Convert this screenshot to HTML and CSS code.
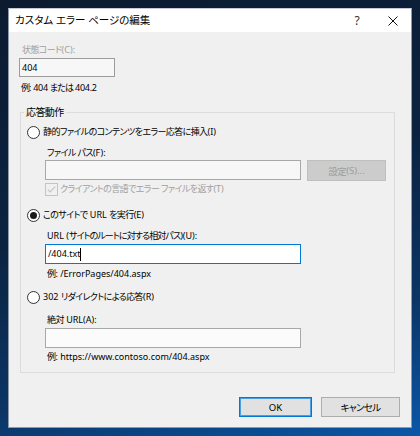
FILE: index.html
```html
<!DOCTYPE html>
<html lang="ja">
<head>
<meta charset="utf-8">
<title>カスタム エラー ページの編集</title>
<link rel="stylesheet" href="styles.css">
</head>
<body>
<div class="window">
  <div class="titlebar">
    <span class="title">カスタム エラー ページの編集</span>
    <span class="tb-btn help">?</span>
    <span class="tb-btn close"><svg width="10" height="10" viewBox="0 0 10 10"><path d="M0.5 0.5L9.5 9.5M9.5 0.5L0.5 9.5" stroke="#111" stroke-width="1" fill="none"/></svg></span>
  </div>
  <div class="client">
    <div class="row disabled r-status"><span class="ja">状態コード</span>(C):</div>
    <div class="textbox tb-status">404</div>
    <div class="row r-ex1"><span class="ja">例</span>: 404 <span class="ja">または</span> 404.2</div>

    <fieldset class="group">
      <legend><span class="ja">応答動作</span></legend>

      <div class="row radio-row r1"><span class="radio"></span><span><span class="ja">静的ファイルのコンテンツをエラー応答に挿入</span>(I)</span></div>
      <div class="row indent r-fp"><span class="ja">ファイル パス</span>(F):</div>
      <div class="input-row">
        <div class="textbox wide"></div>
        <div class="btn btn-disabled"><span class="ja">設定</span>(S)...</div>
      </div>
      <div class="row check-row">
        <svg class="check" width="13" height="13" viewBox="0 0 13 13"><rect x="0.5" y="0.5" width="12" height="12" fill="#f0f0f0" stroke="#c4c4c4"/><path d="M2.8 6.6L5.2 9L10.2 3.6" stroke="#c4c4c4" stroke-width="1.2" fill="none"/></svg>
        <span class="disabled"><span class="ja">クライアントの言語でエラー ファイルを返す</span>(T)</span>
      </div>

      <div class="row radio-row r2"><span class="radio on"></span><span><span class="ja">このサイトで</span> URL <span class="ja">を実行</span>(E)</span></div>
      <div class="row indent r-url">URL (<span class="ja">サイトのルートに対する相対パス</span>)(U):</div>
      <div class="textbox wide focused tb-url"><span>/404.txt</span><span class="caret"></span></div>
      <div class="row indent r-ex2"><span class="ja">例</span>: /ErrorPages/404.aspx</div>

      <div class="row radio-row r3"><span class="radio"></span><span>302 <span class="ja">リダイレクトによる応答</span>(R)</span></div>
      <div class="row indent r-abs"><span class="ja">絶対</span> URL(A):</div>
      <div class="textbox wide white tb-abs"></div>
      <div class="row indent r-ex3"><span class="ja">例</span>: https://www.contoso.com/404.aspx</div>
    </fieldset>

    <div class="buttons">
      <div class="btn btn-default ok">OK</div>
      <div class="btn cancel"><span class="ja">キャンセル</span></div>
    </div>
  </div>
</div>
</body>
</html>
```

FILE: styles.css
```css
html, body {
  margin: 0;
  padding: 0;
}
body {
  width: 420px;
  height: 436px;
  overflow: hidden;
  background: linear-gradient(165deg, #0c1b2f 0%, #0b2341 45%, #0b3565 75%, #0a57a8 100%);
  font-family: "Noto Sans", "Noto Sans CJK JP", sans-serif;
  font-size: 9px;
  font-feature-settings: "palt";
  color: #000;
}
.ja {
  letter-spacing: -0.6px;
}
.window {
  box-sizing: border-box;
  margin: 8px 0 0 8px;
  width: 404px;
  height: 420px;
  border: 1px solid #8e9aa8;
  border-top-color: #c8ccd2;
  background: #f0f0f0;
  display: flex;
  flex-direction: column;
}
.titlebar {
  height: 23px;
  background: #fff;
  display: flex;
  align-items: center;
  line-height: 23px;
}
.title {
  flex: 1;
  padding-left: 6px;
  font-size: 10.5px;
}
.tb-btn {
  width: 36px;
  height: 23px;
  display: flex;
  align-items: center;
  justify-content: center;
}
.help {
  font-size: 12px;
  color: #333;
}
.close svg {
  display: block;
}
.client {
  flex: 1;
  padding-left: 10px;
  display: flex;
  flex-direction: column;
  align-items: flex-start;
}
.row {
  height: 14px;
  line-height: 14px;
  white-space: pre;
  display: flex;
  align-items: center;
}
.disabled {
  color: #a0a0a0;
}
.r-status {
  margin-top: 11px;
  padding-left: 3px;
}
.textbox {
  box-sizing: border-box;
  height: 20px;
  border: 1px solid #a8a8a8;
  background: #f7f7f7;
  padding-left: 2px;
  line-height: 18px;
  display: flex;
  align-items: center;
}
.tb-status {
  margin-top: 1px;
  width: 96px;
  height: 19px;
  border-color: #9c9c9c;
}
.r-ex1 {
  margin-top: 4px;
  padding-left: 2px;
  letter-spacing: -0.3px;
}
.r-ex1 .ja {
  letter-spacing: -0.9px;
}
.group {
  margin: 10px 0 0 1px;
  width: 375px;
  box-sizing: border-box;
  padding: 0 0 8px 0;
  border: 1px solid #dcdcdc;
  min-width: 0;
}
.group legend {
  margin-left: 3px;
  padding: 0 2px;
  height: 14px;
  line-height: 14px;
  font-size: 10px;
}
.radio-row {
  padding-left: 6px;
}
.radio {
  box-sizing: border-box;
  width: 13px;
  height: 13px;
  border: 1px solid #333;
  border-radius: 50%;
  background: #fff;
  margin-right: 3px;
  display: flex;
  align-items: center;
  justify-content: center;
}
.radio.on::after {
  content: "";
  width: 7px;
  height: 7px;
  border-radius: 50%;
  background: #1a1a1a;
}
.r1 { margin-top: 6px; }
.indent { padding-left: 26px; }
.r-fp { margin-top: 7px; }
.input-row {
  margin-left: 24px;
  display: flex;
  align-items: flex-start;
  gap: 6px;
}
.wide {
  width: 256px;
  margin-left: 24px;
}
.input-row .wide {
  margin-left: 0;
}
.btn {
  box-sizing: border-box;
  height: 20px;
  border: 1px solid #adadad;
  background: #e1e1e1;
  display: flex;
  align-items: center;
  justify-content: center;
  font-size: 9.5px;
}
.btn-disabled {
  width: 79px;
  height: 21px;
  background: #cccccc;
  border-color: #bfbfbf;
  color: #9d9d9d;
}
.check-row {
  margin-top: 1px;
  padding-left: 24px;
}
.check {
  display: block;
  margin-right: 2px;
}
.r2 { margin-top: 12px; }
.r-url { margin-top: 7px; }
.r-url .ja {
  letter-spacing: -0.9px;
}
.tb-url {
  margin-top: 1px;
}
.focused {
  background: #fff;
  border-color: #0078d7;
}
.caret {
  display: inline-block;
  width: 1px;
  height: 13px;
  background: #000;
}
.r-ex2 { margin-top: 3px; }
.r3 { margin-top: 9px; }
.r-abs { margin-top: 9px; }
.tb-abs { margin-top: 1px; }
.white { background: #fbfbfb; }
.r-ex3 { margin-top: 2px; }
.buttons {
  align-self: stretch;
  margin-top: 24px;
  padding-right: 11px;
  display: flex;
  justify-content: flex-end;
  gap: 9px;
}
.ok {
  width: 73px;
  border-color: #0078d7;
  box-shadow: inset 0 0 0 1px #4d9fe3;
}
.cancel {
  width: 79px;
}
```
